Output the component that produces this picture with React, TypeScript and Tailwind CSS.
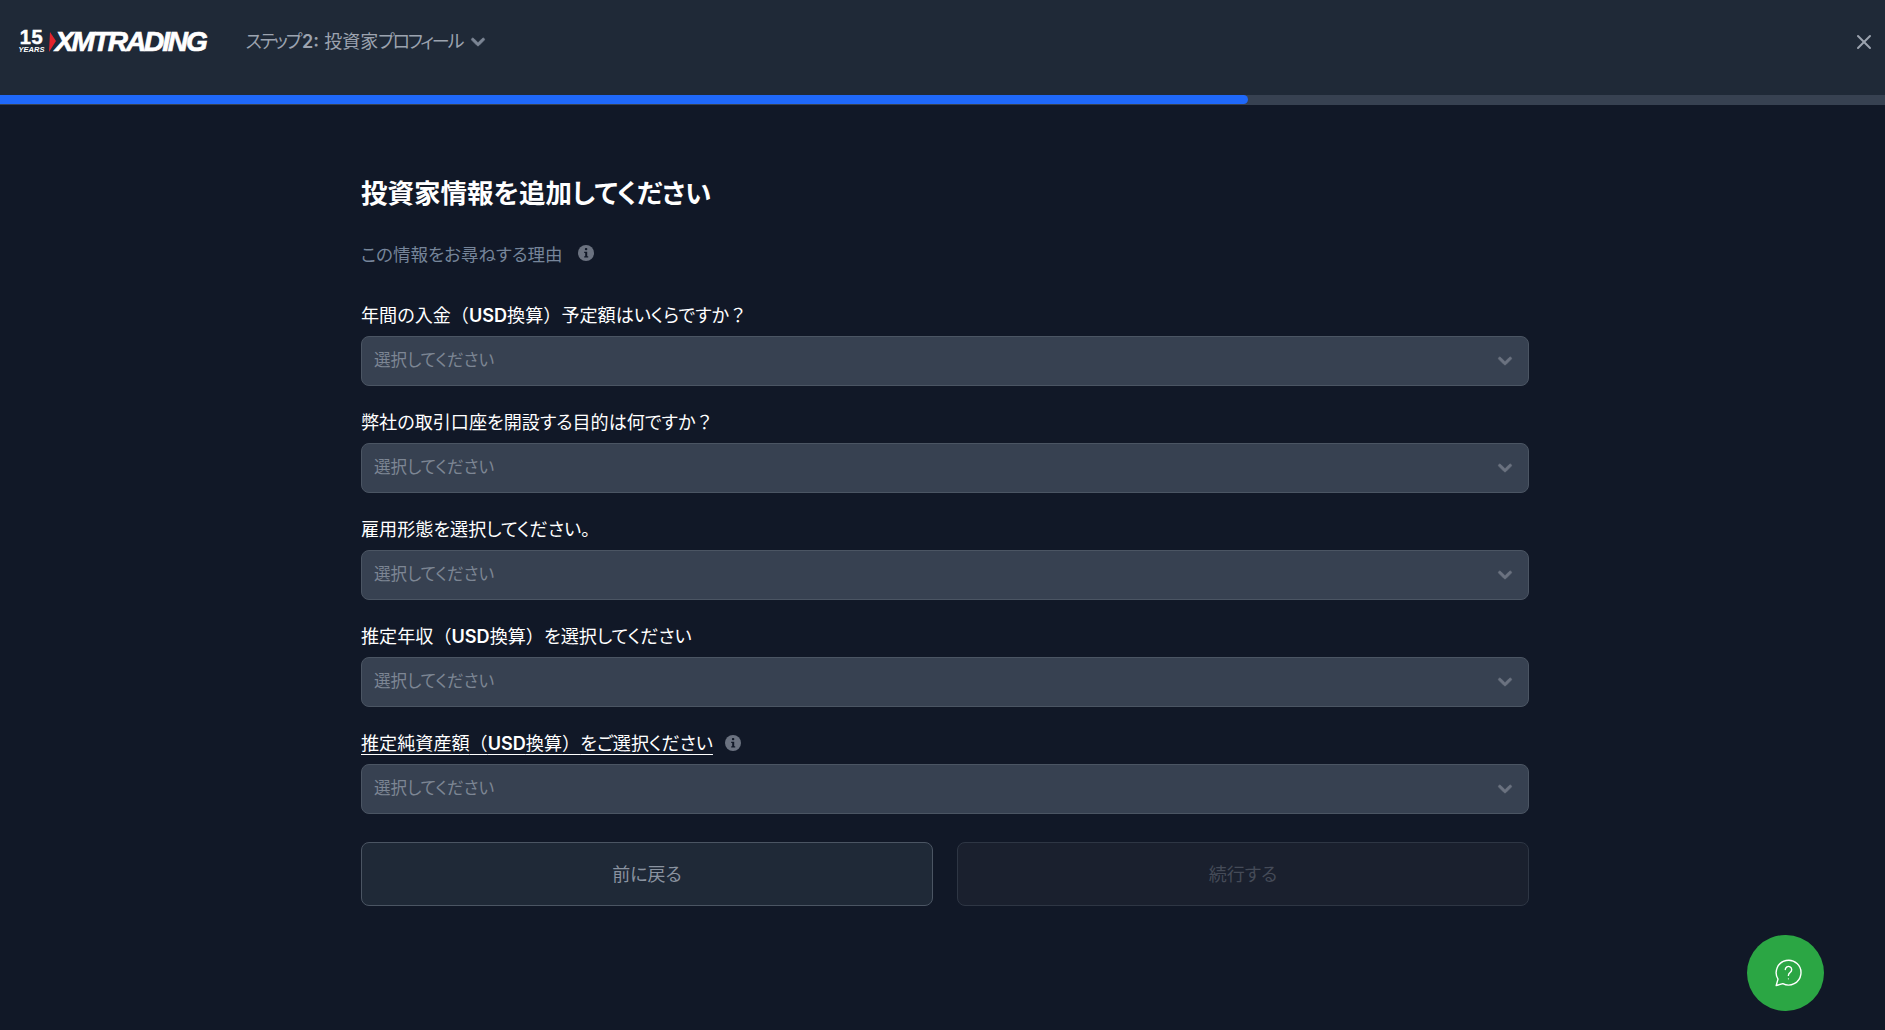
import { X } from "lucide-react";
import { HiChevronDown } from "react-icons/hi";

const fields = [
  { label: "年間の入金（USD換算）予定額はいくらですか？" },
  { label: "弊社の取引口座を開設する目的は何ですか？" },
  { label: "雇用形態を選択してください。" },
  { label: "推定年収（USD換算）を選択してください" },
  { label: "推定純資産額（USD換算）をご選択ください", hint: true },
];

function InfoIcon() {
  return (
    <svg width="16" height="16" viewBox="0 0 16 16" className="shrink-0">
      <circle cx="8" cy="8" r="8" fill="#6b7280" />
      <rect x="6.9" y="3" width="2.4" height="2.3" rx="1" fill="#111827" />
      <path d="M6.2 6.7h3v4.6h1v1.3H6.2v-1.3h1V8H6.2z" fill="#111827" />
    </svg>
  );
}

function Chevron({ className }: { className: string }) {
  return <HiChevronDown size={26} stroke="currentColor" strokeWidth={0.6} className={className} />;
}

// parens and ？ stay full width, USD is heavier
function LabelText({ text }: { text: string }) {
  return (
    <>
      {text.split(/(（|）|？|USD)/).map((part, i) => {
        if (part === "USD") return <span key={i} className="font-semibold">{part}</span>;
        if (part === "（" || part === "）" || part === "？")
          return <span key={i} className="[font-feature-settings:normal]">{part}</span>;
        return part;
      })}
    </>
  );
}

function Logo() {
  return (
    <div className="flex items-center font-['Liberation_Sans',sans-serif] text-white select-none">
      <div className="flex w-[27px] flex-col items-center">
        <span className="text-[20px] font-bold leading-[15px] tracking-[0.6px] [-webkit-text-stroke:0.5px_white]">15</span>
        <span className="mt-[1px] text-[7.5px] font-bold italic leading-[7px]">YEARS</span>
      </div>
      <svg width="7" height="20" viewBox="0 0 7 20" className="ml-[4px]">
        <path d="M1 0L7 9L0 20Z" fill="#e3232c" />
      </svg>
      <span className="-ml-[1px] text-[28px] font-bold italic leading-none tracking-[-2.1px] [-webkit-text-stroke:0.7px_white]">XMTRADING</span>
    </div>
  );
}

export default function App() {
  return (
    <div className="relative h-[1030px] w-full overflow-hidden bg-[#111827] font-['Inter','Noto_Sans_CJK_JP',sans-serif] [font-feature-settings:'palt']">
      {/* header */}
      <header className="flex h-[95px] items-center bg-[#1f2937] pb-[12px] pl-[18px] pr-[9px]">
        <Logo />
        <div className="ml-[40px] flex items-center gap-[3px] text-[18px] text-[#9ca3af]">
          <span>
            <span className="tracking-[-2.2px]">ステップ</span>
            <span className="ml-[2px] font-semibold">2:</span> 投資家
            <span className="tracking-[-2.2px]">プロフィール</span>
          </span>
          <Chevron className="text-[#7b8594]" />
        </div>
        <button className="ml-auto text-[#9ca3af]">
          <X size={24} strokeWidth={2} />
        </button>
      </header>
      {/* progress */}
      <div className="h-[10px] bg-[#374151]">
        <div className="h-[9px] w-[1248px] rounded-r-full bg-[#1f68f9]" />
      </div>

      <main className="ml-[361px] w-[1168px] pt-[70px]">
        <h1 className="text-[26.5px] font-bold leading-9 text-white">投資家情報を追加してください</h1>
        <div className="mt-[32px] flex h-6 items-center gap-[15px] text-[17.5px] text-[#76859a]">
          <span>この情報をお尋ねする理由</span>
          <span className="-mt-1"><InfoIcon /></span>
        </div>

        <div className="mt-[35px] flex flex-col gap-[23px]">
          {fields.map((f) => (
            <div key={f.label}>
              <div className="mb-[10px] flex h-[24px] items-center gap-3 pt-[1px]">
                <label className={`text-[18.1px] leading-[24px] text-white ${f.hint ? "underline underline-offset-4" : ""}`}>
                  <LabelText text={f.label} />
                </label>
                {f.hint && <InfoIcon />}
              </div>
              <div className="flex h-[50px] items-center justify-between rounded-lg border border-[#4b5563] bg-[#374151] pb-[1px] pl-3 pr-[10px] text-[16.6px] text-[#7d8694]">
                <span>選択してください</span>
                <Chevron className="text-[#6b7280]" />
              </div>
            </div>
          ))}
        </div>

        <div className="mt-7 grid grid-cols-2 gap-6">
          <button className="h-16 rounded-lg border border-[#4b5563] bg-[#1f2937] text-[18px] text-[#8a93a0]">前に戻る</button>
          <button className="h-16 rounded-lg border border-[#2e3644] bg-[#1a202e] text-[18px] text-[#454b58]">続行する</button>
        </div>
      </main>

      {/* help chat */}
      <button className="absolute bottom-[19px] right-[61px] flex h-[76px] w-[77px] items-center justify-center rounded-full bg-[#2ba644]">
        <svg width="30" height="30" viewBox="0 0 30 30" fill="none" stroke="#fff" strokeWidth="1.4" className="ml-1">
          <path d="M3.2 27.5l1.8-6.4A12.4 12.4 0 1 1 9.8 25.6z" strokeLinejoin="round" />
          <path d="M12.3 11.6a3.2 3.2 0 1 1 4.9 2.7c-1.2.8-1.8 1.5-1.8 3.1" strokeLinecap="round" />
          <circle cx="15.4" cy="20.8" r="0.6" fill="#fff" stroke="none" />
        </svg>
      </button>
    </div>
  );
}
